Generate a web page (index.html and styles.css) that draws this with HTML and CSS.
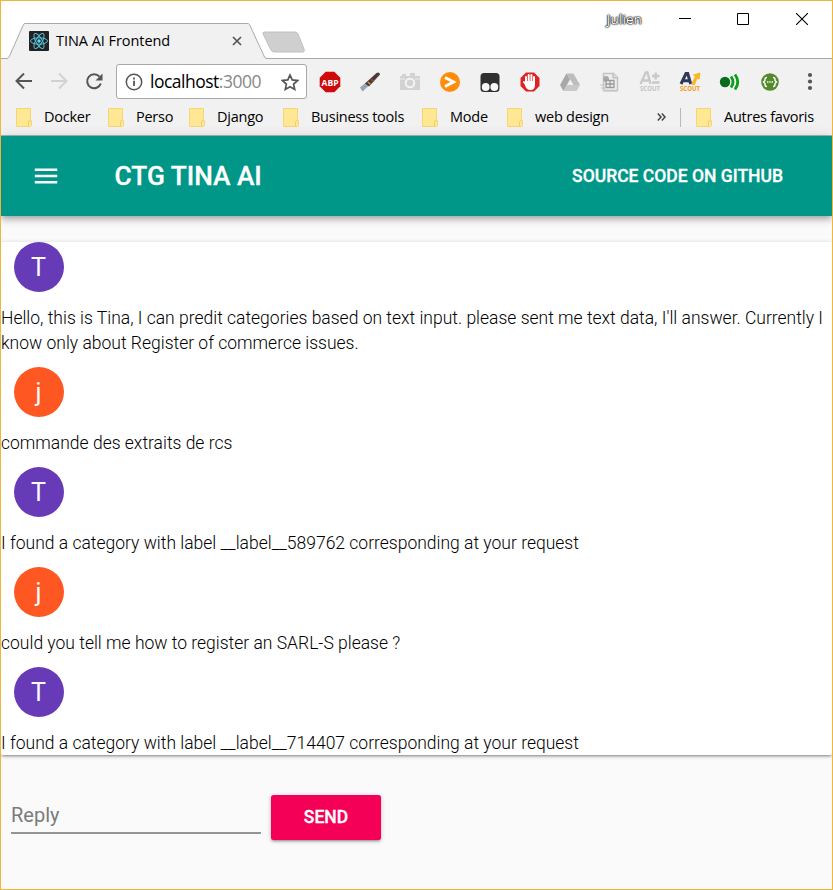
FILE: index.html
```html
<!DOCTYPE html>
<html lang="en">
<head>
<meta charset="utf-8">
<title>TINA AI Frontend</title>
<link rel="stylesheet" href="styles.css">
</head>
<body>
<svg width="0" height="0" class="defs" aria-hidden="true">
  <symbol id="folder" viewBox="0 0 16 19">
    <path d="M.5.5h14v11l1 1.500v4q0 1-1 1.500H.5z" fill="#ffe793" stroke="#f3d774"/>
    <path d="M12.500 18v-4q0-1.500 2-1.500" fill="none" stroke="#efd067"/>
  </symbol>
</svg>
<div class="window">
  <header class="tabstrip">
    <svg class="tab-shape" width="310" height="36" viewBox="0 0 310 36">
      <path d="M0 35.500H6Q7.500 35.500 8.500 33L22.500 1.500Q23 .5 24 .5H246Q248 .5 248.500 1.500L263.500 34Q264 35.500 266 35.500H310V36H0z" fill="#f1f1f1"/>
      <path d="M0 35.500H6Q7.500 35.500 8.500 33L22.500 1.500Q23 .5 24 .5H246Q248 .5 248.500 1.500L263.500 34Q264 35.500 266 35.500H310" fill="none" stroke="#aaa"/>
      <path d="M264 9H294Q296 9 297 11L303 26Q304 29 302 29H273Q271 29 270 27L262 11Q261 9 264 9z" fill="#cfcfcf" stroke="#c0c0c0"/>
    </svg>
    <div class="tab">
      <svg width="20" height="20" viewBox="0 0 20 20">
        <rect width="20" height="20" rx="1" fill="#222"/>
        <g fill="none" stroke="#56bfd9" stroke-width="1">
          <ellipse cx="10" cy="10" rx="8.500" ry="3.200"/>
          <ellipse cx="10" cy="10" rx="8.500" ry="3.200" transform="rotate(60 10 10)"/>
          <ellipse cx="10" cy="10" rx="8.500" ry="3.200" transform="rotate(120 10 10)"/>
        </g>
        <circle cx="10" cy="10" r="1.700" fill="#61dafb"/>
      </svg>
      <span class="tab-title">TINA AI Frontend</span>
      <svg width="10" height="10" viewBox="0 0 10 10"><path d="M1 1l8 8M9 1L1 9" stroke="#555" stroke-width="1.700"/></svg>
    </div>
    <div class="controls">
      <span class="user">Julien</span>
      <svg width="12" height="12" viewBox="0 0 12 12"><path d="M0 5.500h12" stroke="#000"/></svg>
      <svg width="12" height="12" viewBox="0 0 12 12"><path d="M.5.5h11v11H.5z" fill="none" stroke="#000"/></svg>
      <svg width="12" height="12" viewBox="0 0 12 12"><path d="M0 0l12 12M12 0L0 12" stroke="#000" stroke-width="1.100"/></svg>
    </div>
  </header>

  <div class="toolbar">
    <nav class="nav">
      <svg width="18" height="18" viewBox="0 0 18 18"><path d="M17 8H2M9 .5L1.500 8 9 15.500" fill="none" stroke="#555" stroke-width="2"/></svg>
      <svg width="18" height="18" viewBox="0 0 18 18"><path d="M1 8h15M9 .5L16.500 8 9 15.500" fill="none" stroke="#d2d2d2" stroke-width="2"/></svg>
      <svg width="18" height="18" viewBox="0 0 18 18"><path d="M14.500 3.700A7 7 0 1 0 15.800 10.500" fill="none" stroke="#555" stroke-width="2"/><path d="M17.500.5v7h-7z" fill="#555"/></svg>
    </nav>
    <div class="omnibox">
      <svg width="18" height="18" viewBox="0 0 18 18"><circle cx="9" cy="9" r="7.700" fill="none" stroke="#555" stroke-width="1.500"/><path d="M9 7.800v5.200M9 4.600v1.800" stroke="#555" stroke-width="1.800"/></svg>
      <span class="url">localhost<span class="port">:3000</span></span>
      <svg width="18" height="18" viewBox="0 0 18 18"><path d="M9 2l2.200 4.900 5.400.6-4 3.600 1.100 5.300L9 13.700l-4.700 2.700 1.100-5.300-4-3.600 5.400-.6z" fill="none" stroke="#555" stroke-width="1.700"/></svg>
    </div>
    <div class="extensions">
      <svg width="22" height="22" viewBox="0 0 22 22"><path d="M6.700.7h8.600l6 6v8.600l-6 6H6.700l-6-6V6.700z" fill="#cf0a0a"/><text x="11" y="14.600" text-anchor="middle" class="abp" textLength="17" lengthAdjust="spacingAndGlyphs">ABP</text></svg>
      <svg width="22" height="22" viewBox="0 0 22 22"><path d="M1 16.500l6-5 3 3-6.500 6z" fill="#99a5b2"/><path d="M6 12.500L17.500 2q3-1.500 3.500 1.500L10 15.500z" fill="#4a3b36"/><path d="M9 11l2.500 2.500" stroke="#c2a24c" stroke-width="1.500"/><circle cx="13" cy="9" r="1" fill="#d92e20"/><circle cx="14.500" cy="10" r=".8" fill="#4b8d42"/></svg>
      <svg width="22" height="22" viewBox="0 0 22 22"><path d="M3 3h4v2h4V2h5v3h5v14H1V5h2z" fill="#d2d2d2"/><path d="M1 8h5M16 8h5" stroke="#eee"/><circle cx="11" cy="12" r="4.300" fill="#d2d2d2" stroke="#f4f4f4" stroke-width="2"/></svg>
      <svg width="22" height="22" viewBox="0 0 22 22"><circle cx="11" cy="11" r="10" fill="#ff8d0c"/><path d="M6 6.500l8.500 4.500L6 15.500" fill="none" stroke="#fff" stroke-width="3"/></svg>
      <svg width="22" height="22" viewBox="0 0 22 22"><rect x="1.500" y="2" width="19" height="19" rx="3.500" fill="#303030"/><circle cx="6.700" cy="16" r="3.900" fill="#f8f8f8"/><circle cx="15.300" cy="16" r="3.900" fill="#f8f8f8"/></svg>
      <svg width="22" height="22" viewBox="0 0 22 22"><path d="M7 1.500h8l5.500 5.500v8L15 20.500H7L1.500 15V7z" fill="#dc2222"/><path d="M7 6v6M9.700 4v7M12.400 4v7M15 6v7M5 11l3 4" stroke="#fff" stroke-width="2" stroke-linecap="round"/><path d="M6 10h10v4q0 5-4.500 5T6 14z" fill="#fff"/></svg>
      <svg width="22" height="22" viewBox="0 0 22 22"><path d="M7.500 2.500h7L21 14h-6.500z" fill="#bdbdbd"/><path d="M7.500 2.500l3.500 6L4.500 20 1 14z" fill="#a8a8a8"/><path d="M8 14h13l-3.500 6h-13z" fill="#c8c8c8"/></svg>
      <svg width="22" height="22" viewBox="0 0 22 22"><path d="M4.500 2.500h10l4 4v13h-14z" fill="#eee" stroke="#c4c4c4" stroke-width="1.500"/><path d="M14 2v5h5" fill="#ddd" stroke="#b4b4b4"/><circle cx="7" cy="8" r="3" fill="#aaa"/><path d="M7 9.500h8v7H7zM11 9v8M7 13h8" fill="#eee" stroke="#9a9a9a" stroke-width="1.300"/><path d="M1 14h5M2 17h5M5 20h13" stroke="#c4c4c4"/></svg>
      <svg width="22" height="22" viewBox="0 0 22 22"><path d="M1.500 13L6.800 1.500h1.700l3 11.500M4 9.500h6.500M13 5h7.500M16.700 1.500v7M13 11.500h7.500" fill="none" stroke="#c9c9c9" stroke-width="2.300"/><text x="11" y="20" text-anchor="middle" class="scout muted" textLength="20" lengthAdjust="spacingAndGlyphs">SCOUT</text></svg>
      <svg width="22" height="22" viewBox="0 0 22 22"><path d="M2 13L7 2.500h1.700l3 10.500M4 9.800h7" fill="none" stroke="#2c3a58" stroke-width="3"/><path d="M12.500 13.500h3L18 7l2 1 1-6-6.500 2 2 1.500z" fill="#fbb626" stroke="#fbb626"/><text x="11" y="20.300" text-anchor="middle" class="scout" textLength="20" lengthAdjust="spacingAndGlyphs">SCOUT</text></svg>
      <svg width="22" height="22" viewBox="0 0 22 22"><circle cx="6" cy="11" r="5.200" fill="#0a6b1c"/><path d="M12 5.500q4 5.500 0 11M16 3.500q5.500 7.500 0 15" fill="none" stroke="#0a9d16" stroke-width="2.800"/></svg>
      <svg width="22" height="22" viewBox="0 0 22 22"><circle cx="11" cy="11" r="8.800" fill="#548a2d"/><path d="M8 6.500q-2 0-2 2v1L4.500 11 6 12.500v1q0 2 2 2M14 6.500q2 0 2 2v1l1.500 1.500-1.500 1.500v1q0 2-2 2" fill="none" stroke="#fff" stroke-width="1.400"/><path d="M8 11h6" stroke="#fff" stroke-width="1.500" stroke-dasharray="1.400 .9"/></svg>
      <svg width="22" height="22" viewBox="0 0 22 22"><g fill="#555"><circle cx="11" cy="4" r="2.100"/><circle cx="11" cy="10.500" r="2.100"/><circle cx="11" cy="17" r="2.100"/></g></svg>
    </div>
  </div>

  <div class="bookmarks">
    <span class="bookmark"><svg width="16" height="19"><use href="#folder"/></svg><span>Docker</span></span>
    <span class="bookmark"><svg width="16" height="19"><use href="#folder"/></svg><span>Perso</span></span>
    <span class="bookmark"><svg width="16" height="19"><use href="#folder"/></svg><span>Django</span></span>
    <span class="bookmark"><svg width="16" height="19"><use href="#folder"/></svg><span>Business tools</span></span>
    <span class="bookmark"><svg width="16" height="19"><use href="#folder"/></svg><span>Mode</span></span>
    <span class="bookmark"><svg width="16" height="19"><use href="#folder"/></svg><span>web design</span></span>
    <svg width="9" height="8" viewBox="0 0 9 8"><path d="M.8.500L4 4 .8 7.500M4.800.5L8 4 4.800 7.500" fill="none" stroke="#444" stroke-width="1.500"/></svg>
    <span class="bookmark others"><svg width="16" height="19"><use href="#folder"/></svg><span>Autres favoris</span></span>
  </div>

  <div class="appbar">
    <svg width="30" height="30" viewBox="0 0 24 24"><path d="M3 18h18v-2H3v2zm0-5h18v-2H3v2zm0-7v2h18V6H3z" fill="#fff"/></svg>
    <h1>CTG TINA AI</h1>
    <a class="source">SOURCE CODE ON GITHUB</a>
  </div>

  <main class="chat">
    <div class="avatar tina">T</div>
    <p>Hello, this is Tina, I can predit categories based on text input. please sent me text data, I'll answer. Currently I know only about Register of commerce issues.</p>
    <div class="avatar user-j">j</div>
    <p>commande des extraits de rcs</p>
    <div class="avatar tina">T</div>
    <p>I found a category with label __label__589762 corresponding at your request</p>
    <div class="avatar user-j">j</div>
    <p>could you tell me how to register an SARL-S please ?</p>
    <div class="avatar tina">T</div>
    <p>I found a category with label __label__714407 corresponding at your request</p>
  </main>

  <form class="reply">
    <input type="text" placeholder="Reply">
    <button type="button">SEND</button>
  </form>
</div>
</body>
</html>
```
FILE: styles.css
```css
* { box-sizing: border-box; }
body { margin: 0; font-family: Roboto, sans-serif; }
svg { display: block; flex: none; }
.defs { position: absolute; }

.window {
  width: 833px;
  height: 890px;
  border: 1px solid #f0b53a;
  background: #fafafa;
  overflow: hidden;
}

/* Browser chrome */
.tabstrip {
  position: relative;
  display: flex;
  justify-content: space-between;
  height: 58px;
  background: linear-gradient(#aaa, #aaa) bottom / 100% 1px no-repeat #fff;
  font-family: "Open Sans", sans-serif;
}
.tab-shape { position: absolute; left: 0; top: 22px; }
.tab {
  position: relative;
  display: flex;
  align-items: center;
  width: 241px;
  height: 36px;
  margin-top: 22px;
  padding-left: 28px;
}
.tab-title { flex: 1; margin: -2px 0 0 7px; font-size: 14.5px; letter-spacing: -0.05px; white-space: nowrap; }
.controls { display: flex; height: 36px; align-items: center; padding-right: 24px; }
.controls svg + svg { margin-left: 46px; }
.controls svg:last-child { margin-left: 47px; }
.user {
  margin-right: 37px;
  font-size: 13.5px;
  letter-spacing: 0.1px;
  color: #fff;
  text-shadow: 0 0 1px #000, 0 0 1px #000, 0 0 2px #333, 0 0 2px #333;
}

.toolbar { display: flex; align-items: center; height: 45px; background: #f1f1f1; }
.nav { display: flex; gap: 17px; width: 115px; padding-left: 14px; }
.omnibox {
  display: flex;
  align-items: center;
  width: 191px;
  height: 35px;
  padding: 0 7px 0 8px;
  background: #fff;
  border: 1px solid #a8a8a8;
  border-radius: 3px;
  font-family: "Open Sans", sans-serif;
}
.url { flex: 1; margin: -1px 0 0 7px; font-size: 17.5px; letter-spacing: -0.5px; }
.port { color: #888; }
.extensions { display: flex; gap: 18px; margin-left: 11.500px; }
.abp { font: 700 9.5px "Open Sans", sans-serif; fill: #fff; }
.scout { font: 700 6.5px "Open Sans", sans-serif; fill: #f49a1c; }
.scout.muted { fill: #c4c4c4; }

.bookmarks {
  display: grid;
  grid-template-columns: 92px 81px 94px 139px 85px 150px 23px 137px;
  align-items: center;
  height: 32px;
  padding-left: 15px;
  background: linear-gradient(#b1b1b1, #b1b1b1) bottom / 100% 1px no-repeat #f1f1f1;
  font: 14.5px "Open Sans", sans-serif;
  letter-spacing: -0.25px;
  white-space: nowrap;
  padding-bottom: 6px;
}
.bookmark { display: flex; align-items: center; gap: 12px; height: 19px; line-height: 17px; }
.bookmark span { padding-bottom: 2px; }
.others { padding-left: 15px; border-left: 1px solid #b9b9b9; }

/* Application */
.appbar {
  position: relative;
  display: flex;
  align-items: center;
  height: 80px;
  padding: 0 49px 0 30px;
  background: #009688;
  color: #fff;
  box-shadow: 0 2px 5px -1px rgba(0,0,0,.2), 0 5px 6px rgba(0,0,0,.14), 0 1px 12px rgba(0,0,0,.12);
}
.appbar h1 { flex: 1; margin: 0 0 0 53.500px; font-size: 26.25px; font-weight: 500; line-height: 30px; -webkit-text-stroke: 0.3px #fff; }
.source { font-size: 17.5px; font-weight: 500; -webkit-text-stroke: 0.3px #fff; }

.chat {
  height: 513px;
  margin-top: 26px;
  background: #fff;
  border-radius: 2px;
  box-shadow: 0 1px 5px rgba(0,0,0,.2), 0 2px 2px rgba(0,0,0,.14), 0 3px 1px -2px rgba(0,0,0,.12);
}
.chat p { margin: 0; padding-top: 14px; font-size: 17.5px; font-weight: 300; line-height: 25px; color: #000; }
.avatar {
  display: flex;
  align-items: center;
  justify-content: center;
  width: 50px;
  height: 50px;
  margin: 11px 0 0 13px;
  border-radius: 50%;
  color: #fff;
  font-size: 25px;
}
.avatar:first-child { margin-top: 0; }
.tina { background: #673ab7; padding-right: 1px; }
.user-j { background: #ff5722; padding-right: 1px; }

.reply { display: flex; gap: 10px; margin: 40px 0 0 10px; }
.reply input {
  width: 250px;
  height: 39px;
  padding: 2px 0 0;
  border: 0;
  border-bottom: 2px solid #949494;
  background: none;
  font: 20px Roboto, sans-serif;
  outline: 0;
}
.reply input::placeholder { color: #7b7b7b; }
.reply button {
  width: 110px;
  height: 45px;
  padding: 0 0 2px;
  border: 0;
  border-radius: 2.5px;
  background: #f50057;
  color: #fff;
  font: 500 17.5px Roboto, sans-serif;
  -webkit-text-stroke: 0.3px #fff;
  box-shadow: 0 1px 5px rgba(0,0,0,.2), 0 2px 2px rgba(0,0,0,.14), 0 3px 1px -2px rgba(0,0,0,.12);
}
```
